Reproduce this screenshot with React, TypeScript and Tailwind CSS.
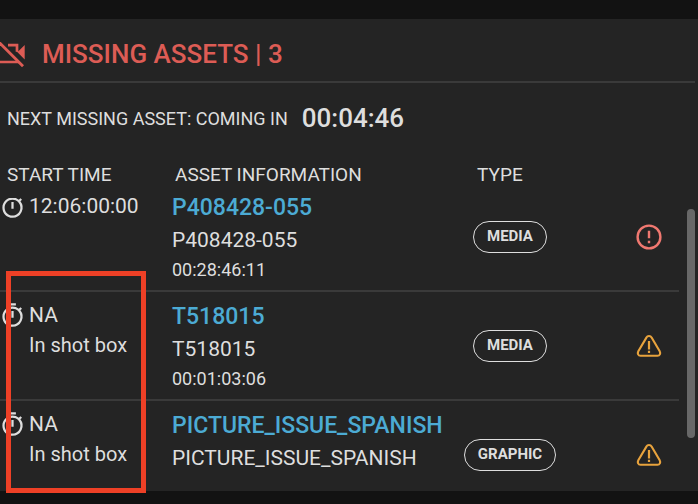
import { MdOutlineTimer } from "react-icons/md";

type Asset = {
  start: string;
  note?: string;
  title: string;
  name: string;
  duration?: string;
  type: string;
  severity: "error" | "warning";
};

const assets: Asset[] = [
  { start: "12:06:00:00", title: "P408428-055", name: "P408428-055", duration: "00:28:46:11", type: "MEDIA", severity: "error" },
  { start: "NA", note: "In shot box", title: "T518015", name: "T518015", duration: "00:01:03:06", type: "MEDIA", severity: "warning" },
  { start: "NA", note: "In shot box", title: "PICTURE_ISSUE_SPANISH", name: "PICTURE_ISSUE_SPANISH", type: "GRAPHIC", severity: "warning" },
];

function CameraOffIcon() {
  return (
    <svg aria-hidden="true" viewBox="0 0 29 28" className="h-7 w-[29px] shrink-0" fill="none" stroke="currentColor">
      <path d="M-2 1.3 23 26.3" strokeWidth="2.8" />
      <path d="M0 22h19M8 5.2h9v6.5" strokeWidth="2.7" />
      <path d="M24.7 5v14.6L16 10.8V8.5l2.4 2.8z" fill="currentColor" stroke="none" />
    </svg>
  );
}

function ErrorIcon() {
  return (
    <svg role="img" aria-label="Error" viewBox="0 0 26 26" className="size-[26px] text-[#f07870]" fill="none" stroke="currentColor">
      <circle cx="13" cy="13" r="11.4" strokeWidth="2.4" />
      <path d="M13 6.8v7.4M13 16.8v2.4" strokeWidth="2.4" />
    </svg>
  );
}

function WarningIcon() {
  return (
    <svg role="img" aria-label="Warning" viewBox="0 0 26 26" className="size-[26px] text-[#e8a33d]" fill="none" stroke="currentColor">
      <path
        d="M10.4 4.6c1.2-2.1 4-2.1 5.2 0l8.1 13.6c1.1 2.2.1 4.6-2.2 4.6H4.5c-2.3 0-3.3-2.4-2.2-4.6z"
        strokeWidth="2.1"
        strokeLinejoin="round"
      />
      <path d="M13 8v8.4M13 17.8v2.2" strokeWidth="2.2" />
    </svg>
  );
}

function AssetRow({ asset }: { asset: Asset }) {
  return (
    <tr className="grid h-[109px] grid-cols-[172px_1fr_118px_110px] border-b-2 border-[#3a3a3a]">
      <td className="pt-2 text-[21px] leading-[30px]">
        <div className="flex items-center">
          <MdOutlineTimer className="-ml-px size-[27px] shrink-0" />
          <span className="pl-[3px]">{asset.start}</span>
        </div>
        {asset.note && <div className="pl-[29px] text-[20px]">{asset.note}</div>}
      </td>
      <td className="pt-[9px]">
        <a href="#asset" className="block text-[23px] leading-8 font-medium text-[#4cabd4]">
          {asset.title}
        </a>
        <div className="text-[21px] leading-8">{asset.name}</div>
        {asset.duration && <div className="text-[18px] leading-7">{asset.duration}</div>}
      </td>
      <td className="flex items-center justify-center">
        <span className="flex h-8 items-center rounded-full border border-[#dedede] px-[13px] pb-px text-[15px] font-bold">
          {asset.type}
        </span>
      </td>
      <td className="flex items-center justify-end pr-[17px]">
        {asset.severity === "error" ? <ErrorIcon /> : <WarningIcon />}
      </td>
    </tr>
  );
}

export default function App() {
  return (
    <div className="relative h-screen overflow-hidden bg-[#121212] pt-[19px] pb-[13px] font-['Roboto',sans-serif] text-[#dedede]">
      <section className="flex h-full flex-col overflow-hidden bg-[#242424]">
        <header className="mr-[3px] flex h-16 shrink-0 items-center border-b-2 border-[#3a3a3a] pt-2 text-[#dd5c55]">
          <CameraOffIcon />
          <h1 className="pl-[13px] text-[26px] leading-8 font-medium">MISSING ASSETS | 3</h1>
        </header>
        <p className="flex h-[70px] shrink-0 items-center gap-[14px] pl-[7px]">
          <span className="text-[18px]">NEXT MISSING ASSET: COMING IN</span>
          <span className="text-[26px] font-medium">00:04:46</span>
        </p>
        <div className="flex min-h-0 grow">
          <table className="block min-w-0 grow text-left">
            <thead className="relative block bg-[#242424]">
              <tr className="grid h-[45px] grid-cols-[172px_1fr_118px_110px] items-center text-[19px]">
                <th className="pl-[7px] font-normal">START TIME</th>
                <th className="pl-[3px] font-normal">ASSET INFORMATION</th>
                <th className="pl-[26px] font-normal">TYPE</th>
                <th aria-label="Status" />
              </tr>
            </thead>
            <tbody className="-mt-[15px] block">
              {assets.map((asset, i) => (
                <AssetRow key={i} asset={asset} />
              ))}
            </tbody>
          </table>
          <div className="w-[19px] shrink-0 pt-[56px] pl-2">
            <div className="h-[229px] w-2 rounded-full bg-[#686868]" />
          </div>
        </div>
      </section>
      <div className="absolute top-[271px] left-[6px] h-[222px] w-[140px] border-5 border-[#ee4026]" />
    </div>
  );
}
